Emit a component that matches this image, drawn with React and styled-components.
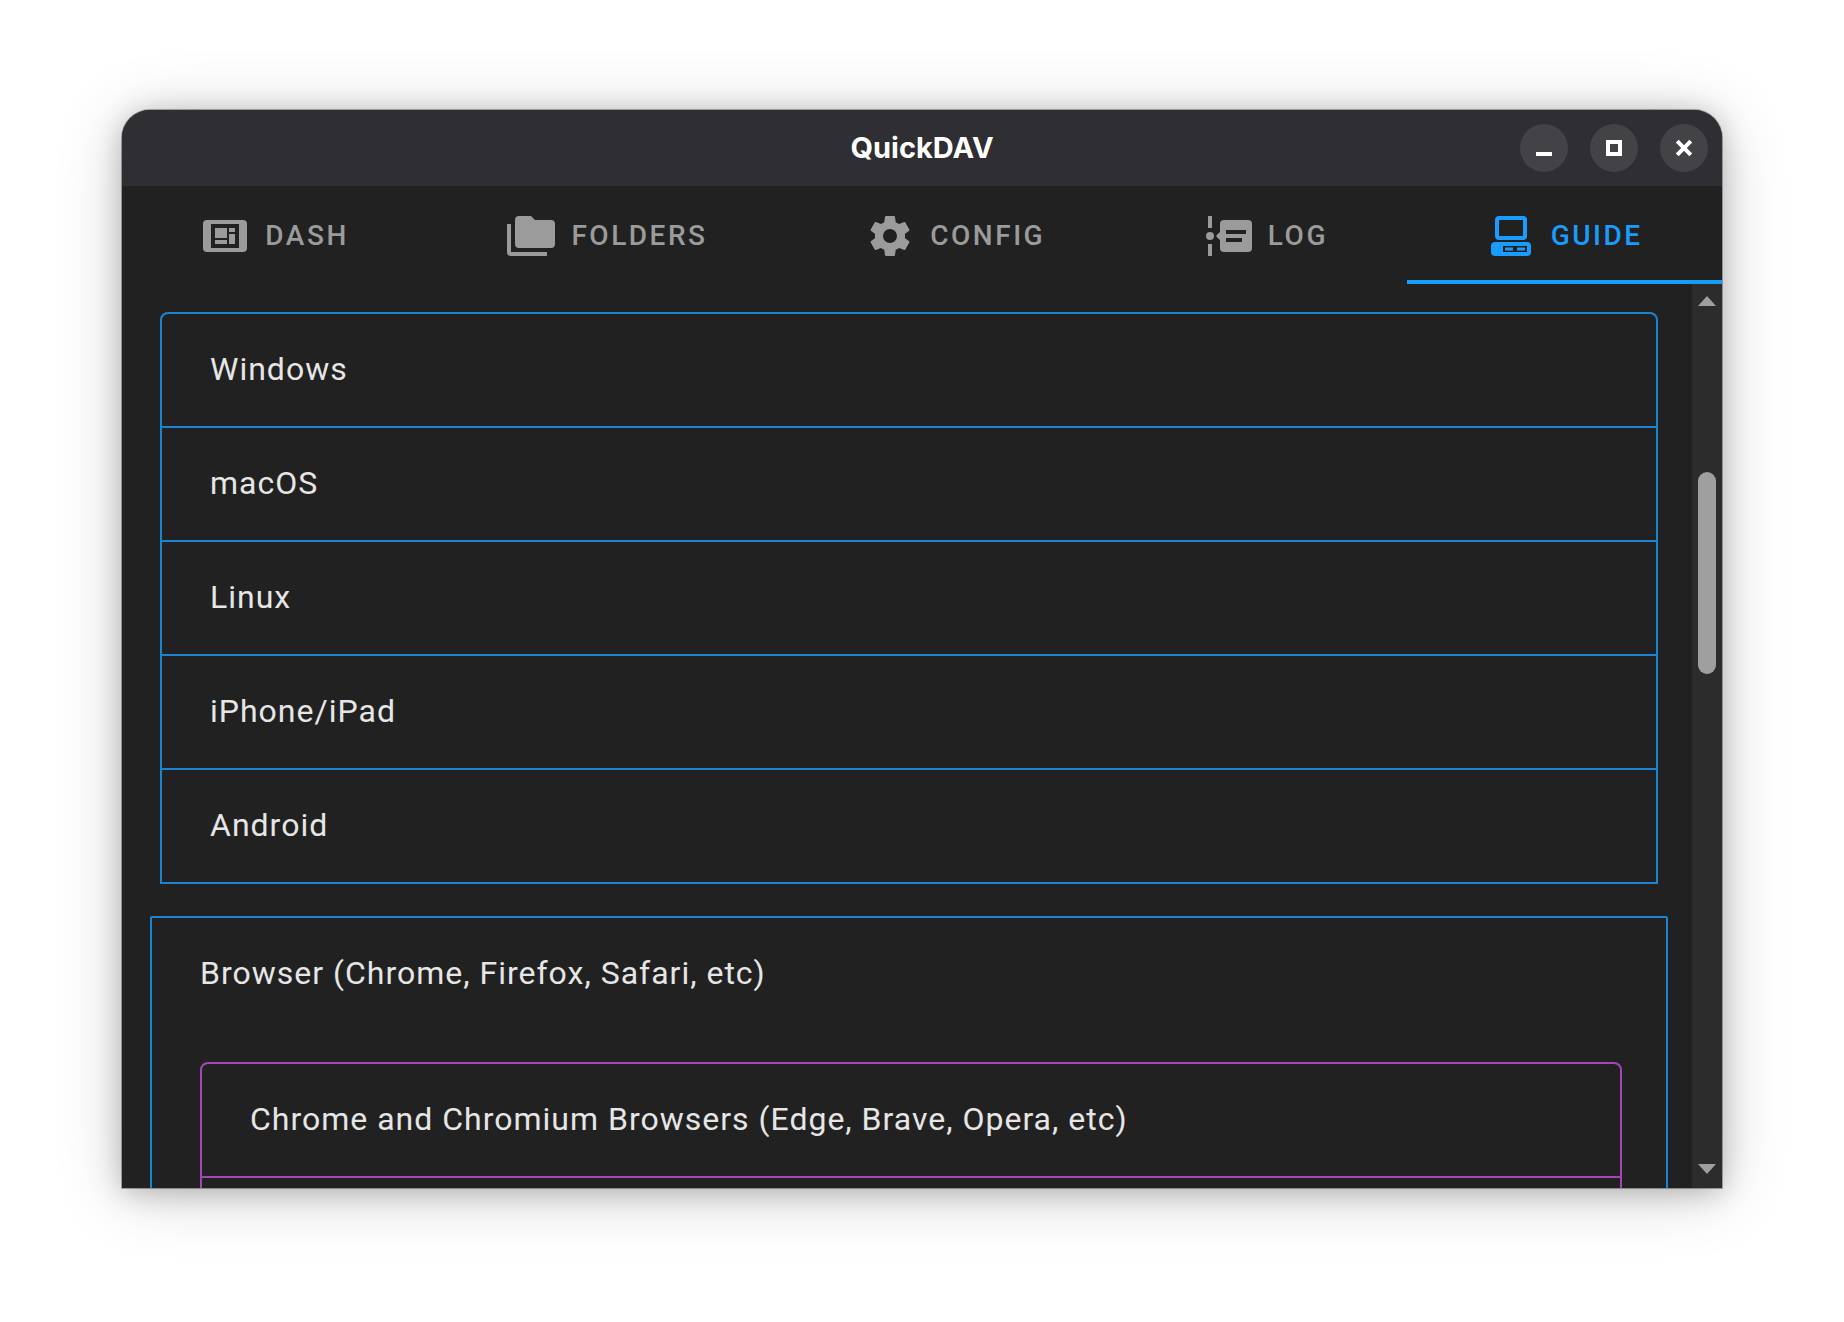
import React from "react";
import styled, { createGlobalStyle, css } from "styled-components";

const color = {
  surface: "#212121",
  titlebar: "#2f2e33",
  control: "#434246",
  blue: "#1a9cff",
  blueLine: "#1b84d2",
  purpleLine: "#a446b8",
  muted: "#9b9b9b",
  text: "#e6e6e6",
  track: "#2c2c2c",
  thumb: "#9f9f9f",
};

const GlobalStyle = createGlobalStyle`
  *, *::before, *::after { box-sizing: border-box; }
  body { margin: 0; background: #fff; font-family: Roboto, sans-serif; }
  button { font: inherit; color: inherit; background: none; border: 0; padding: 0; margin: 0; cursor: pointer; }
`;

const Desktop = styled.div`
  display: flex;
  height: 100vh;
  padding: 110px 122px 134px;
  background: #fff;
`;

const Window = styled.main`
  flex: 1;
  min-width: 0;
  display: flex;
  flex-direction: column;
  overflow: hidden;
  background: ${color.surface};
  border-radius: 28px 28px 0 0;
  box-shadow:
    0 0 0 1px rgba(0, 0, 0, 0.3),
    0 4px 28px rgba(0, 0, 0, 0.22),
    0 6px 66px rgba(0, 0, 0, 0.19);
`;

const TitleBar = styled.header`
  display: grid;
  grid-template-columns: 1fr auto 1fr;
  align-items: center;
  height: 76px;
  padding: 0 14px;
  background: ${color.titlebar};
  color: #fff;
`;

const Title = styled.h1`
  grid-column: 2;
  margin: 0;
  font: 700 29px/36px Inter, sans-serif;
`;

const Controls = styled.div`
  display: flex;
  justify-content: flex-end;
  gap: 22px;
`;

const ControlButton = styled.button`
  display: grid;
  place-items: center;
  width: 48px;
  height: 48px;
  border-radius: 50%;
  background: ${color.control};

  svg {
    overflow: visible;
  }
`;

const Tabs = styled.nav`
  display: flex;
  height: 98px;
`;

const Tab = styled.button`
  flex: 1 1 auto;
  display: flex;
  align-items: center;
  justify-content: center;
  gap: 16px;
  padding-top: 6px;
  border-bottom: 4px solid transparent;
  font-size: 28px;
  line-height: 36px;
  font-weight: 500;
  letter-spacing: 0.09em;
  color: ${color.muted};
  ${(p) =>
    p.$active &&
    css`
      color: ${color.blue};
      border-bottom-color: ${color.blue};
    `}
`;

const Body = styled.div`
  flex: 1;
  min-height: 0;
  display: flex;
`;

const Content = styled.div`
  flex: 1;
  min-width: 0;
  overflow: hidden;
  padding: 28px 24px 0 28px;
`;

const PanelList = styled.div`
  margin: ${(p) => (p.$inset ? "0 10px" : "0")};
  border: 2px solid ${(p) => p.$line};
  border-radius: ${(p) => (p.$rounded ? "8px 8px 0 0" : "2px 2px 0 0")};

  & > * + * {
    border-top: 2px solid ${(p) => p.$line};
  }
`;

const PanelTitle = styled.button`
  display: block;
  width: 100%;
  height: ${(p) => (p.$first ? "112px" : "114px")};
  padding: 0 48px 2px;
  text-align: left;
  font-size: 32px;
  line-height: 48px;
  letter-spacing: 1px;
  color: ${color.text};
`;

const Stack = styled.div`
  display: flex;
  flex-direction: column;
  gap: 32px;
`;

const PanelBody = styled.div`
  padding: 32px 44px 32px 48px;
`;

const Scrollbar = styled.div`
  display: flex;
  flex-direction: column;
  align-items: center;
  width: 30px;
  padding-bottom: 2px;
  background: ${color.track};
`;

const ScrollButton = styled.button`
  display: grid;
  place-items: center;
  width: 30px;
  height: 34px;
`;

const ScrollSpace = styled.div`
  flex: ${(p) => p.$share} 1 0;
`;

const Thumb = styled.div`
  flex: 202 1 0;
  width: 18px;
  border-radius: 9px;
  background: ${color.thumb};
`;

const Icon = ({ d }) => (
  <svg width="48" height="48" viewBox="0 0 24 24" fill="currentColor" fillRule="evenodd" aria-hidden="true">
    <path d={d} />
  </svg>
);

const Arrow = ({ points }) => (
  <svg width="18" height="10" viewBox="0 0 18 10" fill={color.thumb} aria-hidden="true">
    <polygon points={points} />
  </svg>
);

const tabs = [
  {
    label: "DASH",
    d: "M21,4H3A2,2 0 0,0 1,6V18A2,2 0 0,0 3,20H21A2,2 0 0,0 23,18V6A2,2 0 0,0 21,4M19,18H5V6H19V18M7,8H13V13H7V8M14,8H17V10H14V8M14,11H17V16H14V11M7,14H13V16H7V14Z",
  },
  {
    label: "FOLDERS",
    d: "M22,4H14L12,2H6A2,2 0 0,0 4,4V16A2,2 0 0,0 6,18H22A2,2 0 0,0 24,16V6A2,2 0 0,0 22,4M2,6H0V20A2,2 0 0,0 2,22H20V20H2V6Z",
  },
  {
    label: "CONFIG",
    d: "M12,15.5A3.5,3.5 0 0,1 8.5,12A3.5,3.5 0 0,1 12,8.5A3.5,3.5 0 0,1 15.5,12A3.5,3.5 0 0,1 12,15.5M19.43,12.97C19.47,12.65 19.5,12.33 19.5,12C19.5,11.67 19.47,11.34 19.43,11L21.54,9.37C21.73,9.22 21.78,8.95 21.66,8.73L19.66,5.27C19.54,5.05 19.27,4.96 19.05,5.05L16.56,6.05C16.04,5.66 15.5,5.32 14.87,5.07L14.5,2.42C14.46,2.18 14.25,2 14,2H10C9.75,2 9.54,2.18 9.5,2.42L9.13,5.07C8.5,5.32 7.96,5.66 7.44,6.05L4.95,5.05C4.73,4.96 4.46,5.05 4.34,5.27L2.34,8.73C2.21,8.95 2.27,9.22 2.46,9.37L4.57,11C4.53,11.34 4.5,11.67 4.5,12C4.5,12.33 4.53,12.65 4.57,12.97L2.46,14.63C2.27,14.78 2.21,15.05 2.34,15.27L4.34,18.73C4.46,18.95 4.73,19.03 4.95,18.95L7.44,17.94C7.96,18.34 8.5,18.68 9.13,18.93L9.5,21.58C9.54,21.82 9.75,22 10,22H14C14.25,22 14.46,21.82 14.5,21.58L14.87,18.93C15.5,18.67 16.04,18.34 16.56,17.94L19.05,18.95C19.27,19.03 19.54,18.95 19.66,18.73L21.66,15.27C21.78,15.05 21.73,14.78 21.54,14.63L19.43,12.97Z",
  },
  {
    label: "LOG",
    d: "M4,2H2V8H4V2M4,16H2V22H4V16M5,12A2,2 0 0,1 3,14A2,2 0 0,1 1,12A2,2 0 0,1 3,10A2,2 0 0,1 5,12M22,4H10A2,2 0 0,0 8,6V10L6.6,11.2A1,1 0 0,0 6.6,12.8L8,14V18A2,2 0 0,0 10,20H22A2,2 0 0,0 24,18V6A2,2 0 0,0 22,4M19,15H11V13H19V15M21,11H11V9H21V11Z",
  },
  {
    label: "GUIDE",
    active: true,
    d: "M6,2A2,2 0 0,0 4,4V12A2,2 0 0,0 6,14H18A2,2 0 0,0 20,12V4A2,2 0 0,0 18,2H6M6,4H18V12H6V4M4,15A2,2 0 0,0 2,17V20A2,2 0 0,0 4,22H20A2,2 0 0,0 22,20V17A2,2 0 0,0 20,15H4M8,17H20V20H8V17M9,17.75V19.25H13V17.75H9M15,17.75V19.25H19V17.75H15Z",
  },
];

const systems = ["Windows", "macOS", "Linux", "iPhone/iPad", "Android"];

export default function App() {
  return (
    <>
      <GlobalStyle />
      <Desktop>
        <Window>
          <TitleBar>
            <Title>QuickDAV</Title>
            <Controls>
              <ControlButton aria-label="Minimize">
                <svg width="16" height="16" viewBox="0 0 16 16" fill="#fff">
                  <rect y="12" width="16" height="4" />
                </svg>
              </ControlButton>
              <ControlButton aria-label="Maximize">
                <svg width="16" height="16" viewBox="0 0 16 16" fill="none" stroke="#fff" strokeWidth="4">
                  <rect x="2" y="2" width="12" height="12" />
                </svg>
              </ControlButton>
              <ControlButton aria-label="Close">
                <svg width="16" height="16" viewBox="0 0 16 16" stroke="#fff" strokeWidth="4">
                  <path d="M1.2 1.2 14.8 14.8M14.8 1.2 1.2 14.8" />
                </svg>
              </ControlButton>
            </Controls>
          </TitleBar>
          <Tabs>
            {tabs.map((t) => (
              <Tab key={t.label} $active={t.active} aria-current={t.active ? "page" : undefined}>
                <Icon d={t.d} />
                <span>{t.label}</span>
              </Tab>
            ))}
          </Tabs>
          <Body>
            <Content>
              <Stack>
                <PanelList $inset $rounded $line={color.blueLine}>
                  {systems.map((name, i) => (
                    <PanelTitle key={name} $first={i === 0}>
                      {name}
                    </PanelTitle>
                  ))}
                </PanelList>
                <PanelList $line={color.blueLine}>
                  <section>
                    <PanelTitle $first>Browser (Chrome, Firefox, Safari, etc)</PanelTitle>
                    <PanelBody>
                      <PanelList $rounded $line={color.purpleLine}>
                        <PanelTitle $first>Chrome and Chromium Browsers (Edge, Brave, Opera, etc)</PanelTitle>
                        <PanelTitle aria-label="More browsers" />
                      </PanelList>
                    </PanelBody>
                  </section>
                </PanelList>
              </Stack>
            </Content>
            <Scrollbar>
              <ScrollButton aria-label="Scroll up">
                <Arrow points="9,0 18,10 0,10" />
              </ScrollButton>
              <ScrollSpace $share={154} />
              <Thumb />
              <ScrollSpace $share={478} />
              <ScrollButton aria-label="Scroll down">
                <Arrow points="0,0 18,0 9,10" />
              </ScrollButton>
            </Scrollbar>
          </Body>
        </Window>
      </Desktop>
    </>
  );
}
